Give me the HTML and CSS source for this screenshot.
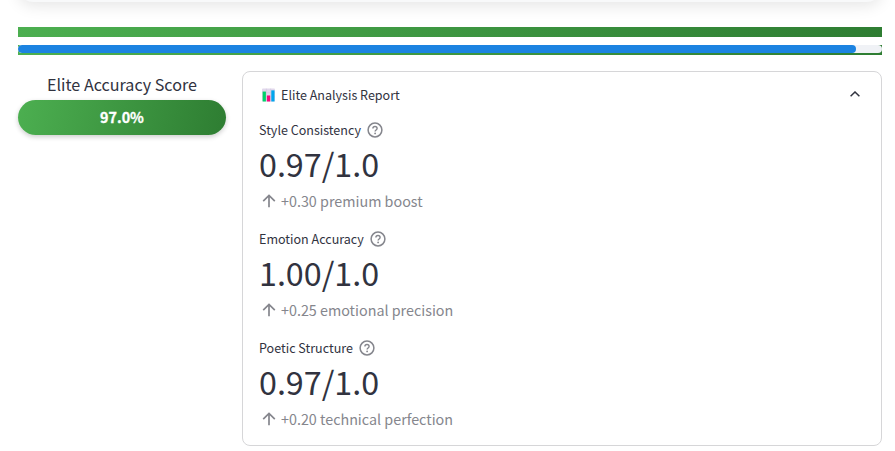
FILE: index.html
```html
<!DOCTYPE html>
<html lang="en">
<head>
<meta charset="utf-8">
<title>Elite Analysis</title>
<link rel="stylesheet" href="styles.css">
</head>
<body>
<svg class="defs" width="0" height="0" aria-hidden="true">
  <symbol id="help" viewBox="0 0 16 16"><g fill="none" stroke="currentColor" stroke-width="1.5"><circle cx="8" cy="8" r="6.9"/><path d="M5.9 6.5c0-1.2.9-2 2.1-2s2.1.8 2.1 1.9c0 1.5-2 1.6-2 3.1" stroke-width="1.4"/></g><circle cx="8.1" cy="11.4" r=".9" fill="currentColor"/></symbol>
  <symbol id="up" viewBox="0 0 14 14"><path d="M7 13.2V1.6M1.2 7.2 7 1.4l5.8 5.8" fill="none" stroke="currentColor" stroke-width="1.7"/></symbol>
</svg>
<main class="page">
  <div class="top-card"></div>
  <div class="stripe"></div>
  <div class="progress"><div class="track"><div class="fill"></div></div></div>
  <div class="columns">
    <section class="score">
      <div class="score-title">Elite Accuracy Score</div>
      <div class="pill">97.0%</div>
    </section>
    <section class="report">
      <header class="report-head">
        <svg class="chart" viewBox="0 0 14 14"><rect width="14" height="14" rx="1" fill="#e1d8ec"/><path d="M0 4.5h14M0 9h14M4.7 0v14M9.3 0v14" stroke="#cbbfdc" stroke-width=".5"/><path fill="#00d26a" d="M.7 3.3h3.5V14H.7z"/><path fill="#f8087c" d="M5.3 7.5h3.5V14H5.3z"/><path fill="#00a6ed" d="M10 2h3.5v12H10z"/></svg>
        <span class="report-title">Elite Analysis Report</span>
        <svg class="chevron" viewBox="0 0 10 6"><path d="M.6 5.3 5 1l4.4 4.3" fill="none" stroke="#31333f" stroke-width="1.5"/></svg>
      </header>
      <div class="metric">
        <div class="label">Style Consistency<svg class="help"><use href="#help"/></svg></div>
        <div class="value">0.97/1.0</div>
        <div class="delta"><svg class="up"><use href="#up"/></svg>+0.30 premium boost</div>
      </div>
      <div class="metric">
        <div class="label">Emotion Accuracy<svg class="help"><use href="#help"/></svg></div>
        <div class="value">1.00/1.0</div>
        <div class="delta"><svg class="up"><use href="#up"/></svg>+0.25 emotional precision</div>
      </div>
      <div class="metric">
        <div class="label">Poetic Structure<svg class="help"><use href="#help"/></svg></div>
        <div class="value">0.97/1.0</div>
        <div class="delta"><svg class="up"><use href="#up"/></svg>+0.20 technical perfection</div>
      </div>
    </section>
  </div>
</main>
</body>
</html>
```
FILE: styles.css
```css
* { box-sizing: border-box; }
body {
  margin: 0;
  background: #fff;
  color: #31333f;
  font-family: "Noto Sans CJK SC", "Noto Sans", sans-serif;
  overflow: hidden;
}
.defs { position: absolute; }
.page { width: 864px; margin-left: 18px; }
.top-card {
  height: 20px;
  margin-top: -18px;
  border-radius: 0 0 15px 15px;
  background: #f8f9fa;
  box-shadow: 0 4px 15px rgba(0, 0, 0, .1);
}
.stripe, .progress { height: 10px; background: linear-gradient(135deg, #4caf50, #2e7d32); }
.stripe { margin-top: 25px; }
.progress { margin-top: 8px; }
.track { height: 8px; border-radius: 4px; background: #f0f2f6; overflow: hidden; }
.fill { width: 97%; height: 8px; border-radius: 4px; background: #1c83e1; }
.columns { display: flex; gap: 16px; margin-top: 16px; align-items: flex-start; }
.score { width: 208px; text-align: center; }
.score-title { height: 29px; line-height: 26px; font-size: 16.12px; white-space: nowrap; }
.pill {
  height: 35px;
  border-radius: 18px;
  background: linear-gradient(100deg, #4caf50, #2e7d32);
  box-shadow: 0 2px 5px rgba(0, 0, 0, .2);
  color: #fff;
  font-size: 14.33px;
  font-weight: 700;
  line-height: 34px;
  -webkit-text-stroke: .3px #fff;
}
.report {
  width: 640px;
  height: 375px;
  padding: 13px 16px 0;
  border: 1px solid #d6d6d8;
  border-radius: 8px;
}
.report-head { display: flex; align-items: center; height: 22px; padding-left: 3px; font-size: 12.54px; line-height: 22px; }
.chart { width: 13px; height: 14px; margin: 0 6px 2px 0; }
.report-title { flex: 1; margin-bottom: 2px; }
.chevron { width: 10px; height: 6px; margin: 0 5px 4px 0; }
.metric { height: 93px; margin-bottom: 16px; }
.report-head + .metric { margin-top: 13px; }
.label { display: flex; align-items: center; height: 20px; font-size: 12.54px; line-height: 20px; }
.help { width: 16px; height: 16px; margin-left: 6px; color: #85868d; }
.value { height: 49px; font-size: 32.25px; line-height: 47px; }
.delta { display: flex; align-items: center; height: 24px; padding-left: 3px; font-size: 14.33px; line-height: 24px; color: #85868d; }
.up { width: 14px; height: 14px; margin-right: 5px; }
```
